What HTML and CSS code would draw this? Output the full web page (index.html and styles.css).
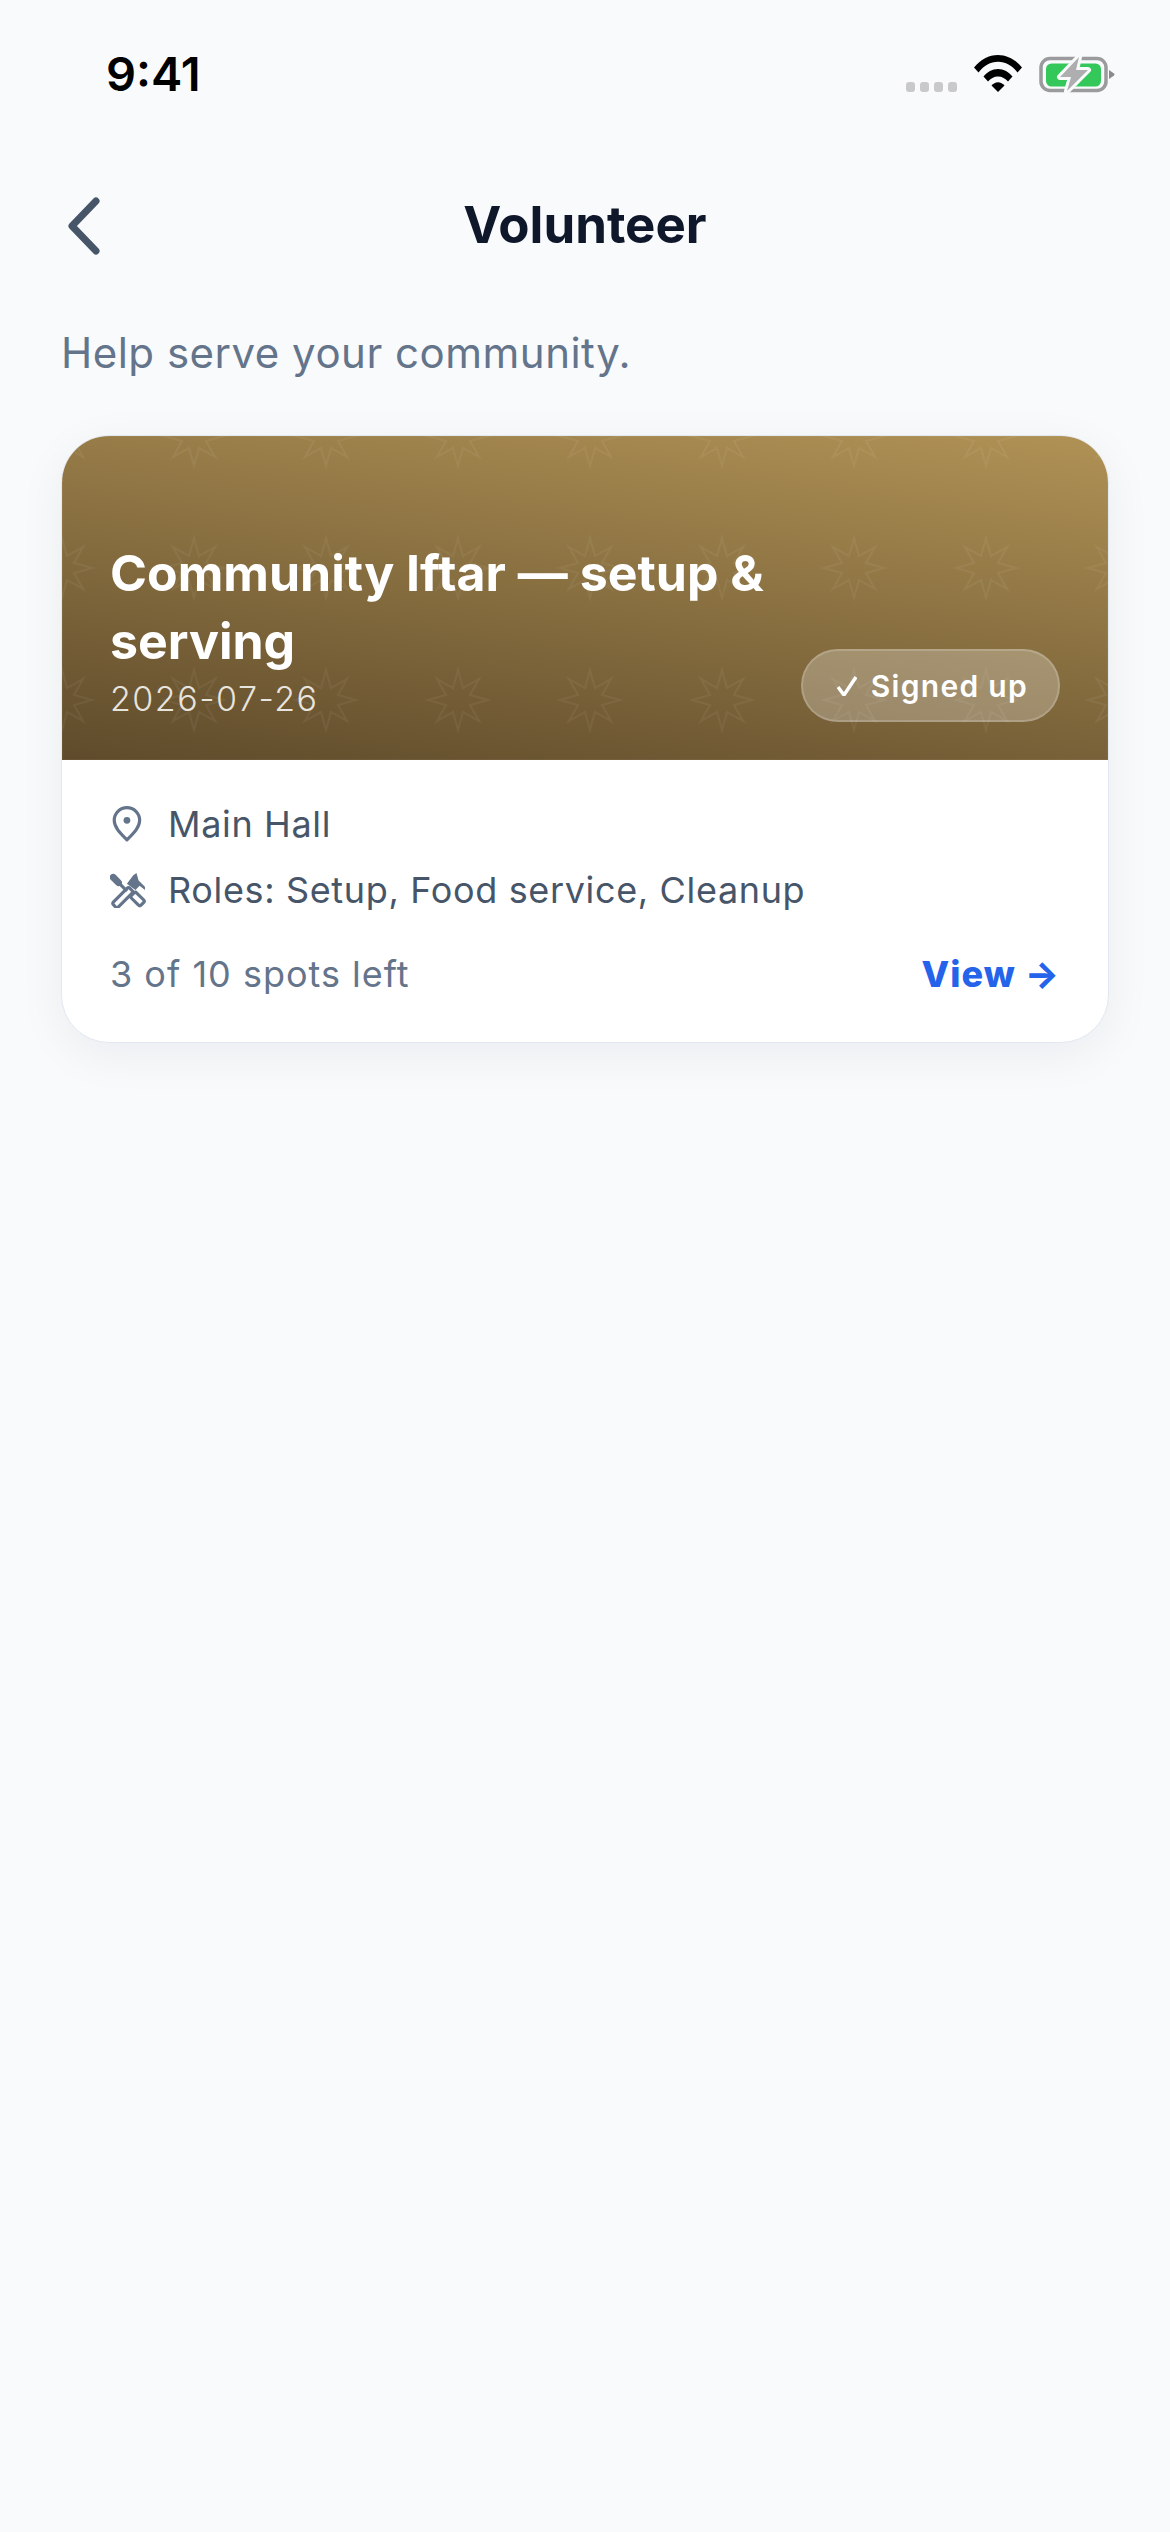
FILE: index.html
```html
<!DOCTYPE html>
<html lang="en">
<head>
  <meta charset="UTF-8">
  <meta name="viewport" content="width=device-width, initial-scale=1.0">
  <title>Volunteer</title>
  <link rel="stylesheet" href="styles.css">
</head>
<body>

<div class="status-bar">
  <span class="time">9:41</span>
  <div class="status-icons">
    <div class="signal"><i></i><i></i><i></i><i></i></div>
    <svg class="wifi" viewBox="0 0 48 37">
      <path d="M0 12.500C6.500 4.500 15 0 24 0s17.500 4.500 24 12.500l-4.500 5C38 10.500 31.500 6.800 24 6.800S10 10.500 4.500 17.500z"/>
      <path d="M9.500 21.500C13 17 18.300 14 24 14s11 3 14.500 7.500L34 26.500c-2.500-3-6-5-10-5s-7.500 2-10 5z"/>
      <path d="M17.500 30.500c1.700-2 4-3.300 6.500-3.300s4.800 1.300 6.500 3.300L24 37z"/>
    </svg>
    <svg class="battery" viewBox="0 0 76 38">
      <rect x="2" y="3.500" width="65" height="32" rx="9" fill="none" stroke="#9b9b9d" stroke-width="3.500"/>
      <rect x="7" y="8.500" width="55" height="23" rx="5.500" fill="#34c759"/>
      <path d="M70 15l5 3.500a1.500 1.500 0 0 1 0 2l-5 3.500z" fill="#8a8a8c"/>
      <path d="M40 2L21 22h11l-4 14 21-21H37z" fill="#aeaeb0" stroke="#f9fafc" stroke-width="6" stroke-linejoin="round" paint-order="stroke"/>
    </svg>
  </div>
</div>

<div class="nav">
  <svg class="back" viewBox="0 0 34 58"><path d="M29 4L5 29l24 25" /></svg>
  <h1>Volunteer</h1>
</div>

<p class="lead">Help serve your community.</p>

<div class="card">
  <div class="hero">
    <svg class="stars">
      <defs>
        <pattern id="star-tile" x="-66" y="-66" width="132" height="132" patternUnits="userSpaceOnUse">
          <path d="M66 36L71 54 87.200 44.800 78 61 96 66 78 71 87.200 87.200 71 78 66 96 61 78 44.800 87.200 54 71 36 66 54 61 44.800 44.800 61 54z"/>
        </pattern>
      </defs>
      <rect width="100%" height="100%" fill="url(#star-tile)"/>
    </svg>
    <div class="hero-text">
      <h2>Community Iftar — setup &amp; serving</h2>
      <div class="date">2026-07-26</div>
    </div>
    <div class="chip">
      <svg class="check" viewBox="0 0 20 20"><path d="M1 11l6 8L19 1"/></svg>
      Signed up
    </div>
  </div>
  <div class="card-body">
    <div class="row">
      <svg class="row-icon" viewBox="0 0 34 34">
        <path class="line" d="M16 32C10 26 4 20.500 4 13.500a12 12 0 0 1 24 0C28 20.500 22 26 16 32z"/>
        <circle cx="16" cy="13.500" r="3.200" fill="#64748b"/>
      </svg>
      <span>Main Hall</span>
    </div>
    <div class="row">
      <svg class="row-icon" viewBox="0 0 34 34">
        <path class="thin" d="M9 11l7 7"/>
        <path class="head" d="M3 5l5 5"/>
        <rect class="line" x="19.500" y="22" width="13" height="7" rx="2" transform="rotate(45 26 25.500)"/>
        <rect class="line" x="1" y="21" width="22" height="6.500" rx="2" transform="rotate(-45 12 24.200)"/>
        <path class="fill" d="M16 11l6-8 3-2 2 7 6 6 0 3-5-4-4 4z"/>
      </svg>
      <span>Roles: Setup, Food service, Cleanup</span>
    </div>
    <div class="card-foot">
      <span class="spots">3 of 10 spots left</span>
      <span class="view">View →</span>
    </div>
  </div>
</div>

</body>
</html>
```

FILE: styles.css
```css
* { box-sizing: border-box; }
html, body { margin: 0; }
body { background-color: #f9fafc; font-family: Inter, "Liberation Sans", sans-serif; height: 100vh; padding: 0 61px; }

.status-bar { display: flex; justify-content: space-between; align-items: flex-start; height: 185px; margin: 0 -6px 0 45px; padding-top: 50px; }
.time { font-size: 47px; font-weight: 600; line-height: 48px; color: #000; }
.status-icons { display: flex; align-items: flex-start; padding-top: 5px; margin-left: auto; }
.signal { display: flex; gap: 5px; margin-top: 27px; margin-right: 17px; }
.signal i { display: block; width: 9px; height: 10px; border-radius: 3px; background-color: #c9c9cb; }
.wifi { width: 48px; height: 37px; fill: #000; margin-right: 17px; }
.battery { width: 76px; height: 38px; }

.nav { display: flex; align-items: center; justify-content: center; position: relative; height: 80px; margin-bottom: 61px; }
.nav h1 { margin: 0; font-size: 51px; font-weight: 700; color: #0f172a; line-height: 60px; }
.back { position: absolute; left: 6px; top: 12px; width: 34px; height: 58px; fill: none; stroke: #475569; stroke-width: 7; stroke-linecap: round; stroke-linejoin: round; }

.lead { margin: 0 0 55px; font-size: 42px; line-height: 54px; color: #64748b; letter-spacing: 0.500px; }

.card { background-color: #ffffff; border: 1px solid #e2e8f0; border-radius: 48px; box-shadow: 0 12px 48px rgba(15, 23, 42, 0.06); overflow: hidden; }

.hero { position: relative; height: 324px; display: flex; justify-content: space-between; align-items: flex-end; padding: 0 48px 38px; background: linear-gradient(188deg, #b09255 0%, #5f4b2b 100%); }
.stars { position: absolute; left: 0; top: 0; width: 100%; height: 100%; fill: none; stroke: rgba(255, 255, 255, 0.05); stroke-width: 2; }
.hero-text { position: relative; max-width: 700px; }
.hero h2 { margin: 0; font-size: 50px; font-weight: 700; line-height: 68px; color: #ffffff; }
.date { font-size: 34px; font-weight: 300; line-height: 47px; color: rgba(255, 255, 255, 0.85); letter-spacing: 1.500px; }
.chip { position: relative; flex: none; display: flex; align-items: center; gap: 14px; height: 73px; padding: 0 30px 0 34px; border: 2px solid rgba(255, 255, 255, 0.18); border-radius: 37px; background-color: rgba(255, 255, 255, 0.25); color: #ffffff; font-size: 30px; font-weight: 600; letter-spacing: 1.300px; }
.check { width: 20px; height: 20px; fill: none; stroke: #ffffff; stroke-width: 3.500; }

.card-body { padding: 31px 48px 0; height: 282px; }
.row { display: flex; align-items: center; gap: 22px; height: 66px; font-size: 36px; color: #475569; letter-spacing: 0.650px; }
.row-icon { width: 36px; height: 36px; flex: none; }
.line { fill: none; stroke: #64748b; stroke-width: 3; stroke-linejoin: round; }
.thin { fill: none; stroke: #64748b; stroke-width: 3; }
.head { fill: none; stroke: #64748b; stroke-width: 6.500; stroke-linecap: round; }
.fill { fill: #64748b; }
.card-foot { display: flex; justify-content: space-between; align-items: center; margin-top: 28px; }
.spots { font-size: 36px; color: #64748b; letter-spacing: 1px; line-height: 46px; }
.view { font-size: 36px; font-weight: 800; color: #2563eb; letter-spacing: 1px; line-height: 46px; }
```
